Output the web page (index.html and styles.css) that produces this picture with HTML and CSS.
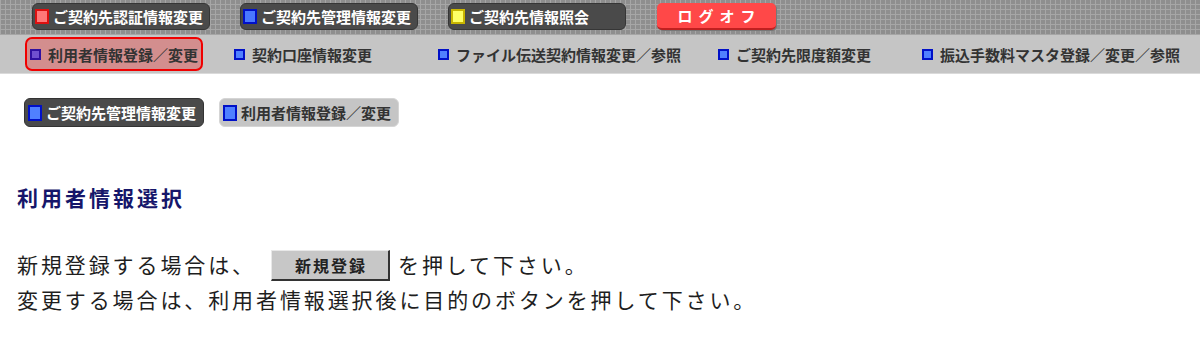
FILE: index.html
```html
<!DOCTYPE html>
<html lang="ja">
<head>
<meta charset="utf-8">
<link rel="stylesheet" href="styles.css">
</head>
<body>
<div class="topbar">
  <div class="tbtn"><span class="ico ico-red"></span>ご契約先認証情報変更</div>
  <div class="tbtn"><span class="ico ico-blue"></span>ご契約先管理情報変更</div>
  <div class="tbtn"><span class="ico ico-yellow"></span>ご契約先情報照会</div>
  <div class="logoff">ログオフ</div>
</div>
<div class="subbar">
  <div class="sitem selected"><span class="sico sico-purple"></span>利用者情報登録／変更</div>
  <div class="sitem"><span class="sico"></span>契約口座情報変更</div>
  <div class="sitem"><span class="sico"></span>ファイル伝送契約情報変更／参照</div>
  <div class="sitem"><span class="sico"></span>ご契約先限度額変更</div>
  <div class="sitem"><span class="sico"></span>振込手数料マスタ登録／変更／参照</div>
</div>
<div class="crumbs">
  <div class="crumb dark"><span class="cico"></span>ご契約先管理情報変更</div>
  <div class="crumb light"><span class="cico"></span>利用者情報登録／変更</div>
</div>
<h2 class="title">利用者情報選択</h2>
<p class="line">新規登録する場合は、<button class="newbtn">新規登録</button>を押して下さい。</p>
<p class="line">変更する場合は、利用者情報選択後に目的のボタンを押して下さい。</p>
</body>
</html>
```
FILE: styles.css
```css
* { box-sizing: border-box; }
body {
  margin: 0;
  font-family: "Noto Sans CJK JP", "Noto Sans", sans-serif;
  background: #fff;
  color: #222;
}
.topbar {
  height: 35px;
  display: flex;
  align-items: flex-start;
  padding: 3px 0 0 32px;
  gap: 30px;
  background-color: #8e8e8e;
  background-image:
    repeating-linear-gradient(90deg, #a6a6a6 0 1px, transparent 1px 5px),
    repeating-linear-gradient(0deg, #a6a6a6 0 1px, transparent 1px 5px);
}
.tbtn {
  width: 178px;
  height: 27px;
  background: #4a4a4a;
  border: 1px solid #363636;
  border-radius: 6px;
  color: #fff;
  font-weight: bold;
  font-size: 15px;
  display: flex;
  align-items: center;
  padding-left: 2px;
  white-space: nowrap;
}
.ico {
  width: 14px;
  height: 15px;
  margin-right: 4px;
  border: 2px solid;
  flex: none;
}
.ico-red { background: #ff7878; border-color: #dd1010; }
.ico-blue { background: #4a78ff; border-color: #0010c8; }
.ico-yellow { background: #ffff66; border-color: #c8b400; }
.logoff {
  margin-left: 1px;
  width: 119px;
  height: 27px;
  background: #ff4848;
  border-radius: 5px;
  border-bottom: 2px solid #c02020;
  box-shadow: 1px 1px 0 #777;
  color: #fff;
  font-weight: bold;
  font-size: 15px;
  letter-spacing: 6px;
  display: flex;
  align-items: center;
  justify-content: center;
  padding-left: 6px;
}
.subbar {
  height: 39px;
  background: #c5c5c5;
  border-bottom: 1px solid #dadada;
  display: grid;
  grid-template-columns: 204px 204px 280px 204px auto;
  padding: 2px 0 0 25px;
  align-items: start;
}
.sitem {
  height: 34px;
  display: flex;
  align-items: center;
  padding-left: 5px;
  font-size: 15px;
  font-weight: bold;
  color: #333;
  white-space: nowrap;
}
.sitem.selected {
  width: 178px;
  background: #d38e8e;
  border: 2px solid #f00000;
  border-radius: 7px;
  padding-left: 3px;
}
.sico {
  width: 11px;
  height: 11px;
  border: 2px solid #0010c8;
  background: #5080ff;
  margin-right: 7px;
  flex: none;
}
.sico-purple { background: #7050d0; border-color: #3010a0; }
.crumbs {
  display: flex;
  gap: 15px;
  padding: 24px 0 0 24px;
}
.crumb {
  width: 180px;
  height: 29px;
  border-radius: 6px;
  display: flex;
  align-items: center;
  padding-left: 3px;
  font-size: 15px;
  font-weight: bold;
  white-space: nowrap;
}
.crumb.dark { background: #4a4a4a; color: #fff; border: 1px solid #333; }
.crumb.light { background: #c5c5c5; color: #333; border: 1px solid #d5d5d5; }
.cico {
  width: 14px;
  height: 16px;
  border: 2px solid #0010c8;
  background: #5080ff;
  margin-right: 4px;
  flex: none;
}
.title {
  margin: 58px 0 0 17px;
  font-size: 21px;
  font-weight: bold;
  color: #16166a;
  letter-spacing: 3px;
  line-height: 24px;
}
.line {
  margin: 0 0 0 17px;
  font-size: 21px;
  letter-spacing: 2.9px;
  line-height: 33px;
  color: #1e1e1e;
}
.title + .line { margin-top: 39px; }
.newbtn {
  font-family: inherit;
  width: 119px;
  height: 31px;
  margin: 0 8px 0 15px;
  vertical-align: middle;
  background: #c7c7c7;
  border-style: solid;
  border-width: 1px 2px 2px 1px;
  border-color: #e8e8e8 #333 #333 #e8e8e8;
  font-size: 16px;
  font-weight: bold;
  letter-spacing: 2px;
  color: #222;
  padding: 0 0 0 2px;
  position: relative;
  top: -2px;
}
```
